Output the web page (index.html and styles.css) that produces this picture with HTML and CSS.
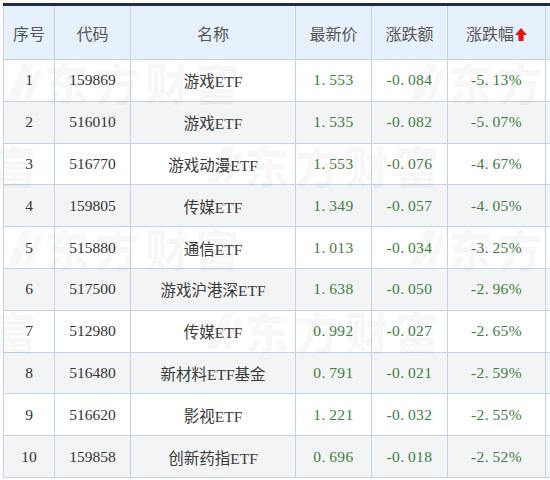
FILE: index.html
```html
<!DOCTYPE html>
<html lang="zh-CN">
<head>
<meta charset="utf-8">
<title>ETF涨跌幅排行</title>
<link rel="stylesheet" href="styles.css">
</head>
<body>
<div class="page">
  <table class="rank">
    <colgroup>
      <col class="c-no"><col class="c-code"><col class="c-name"><col class="c-price"><col class="c-chg"><col class="c-pct"><col class="c-more">
    </colgroup>
    <thead>
      <tr>
        <th>序号</th><th>代码</th><th>名称</th><th>最新价</th><th>涨跌额</th>
        <th>涨跌幅<svg class="sort-up" width="12" height="13" viewBox="0 0 12 13"><polygon points="6,0 12,7 8.6,7 8.6,13 3.4,13 3.4,7 0,7" fill="#e8141b"/></svg></th>
        <th></th>
      </tr>
    </thead>
    <tbody>
      <tr><td>1</td><td>159869</td><td class="name">游戏ETF</td><td class="num">1<span class="dot">.</span>553</td><td class="num">-0<span class="dot">.</span>084</td><td class="num">-5<span class="dot">.</span>13%</td><td></td></tr>
      <tr><td>2</td><td>516010</td><td class="name">游戏ETF</td><td class="num">1<span class="dot">.</span>535</td><td class="num">-0<span class="dot">.</span>082</td><td class="num">-5<span class="dot">.</span>07%</td><td></td></tr>
      <tr><td>3</td><td>516770</td><td class="name">游戏动漫ETF</td><td class="num">1<span class="dot">.</span>553</td><td class="num">-0<span class="dot">.</span>076</td><td class="num">-4<span class="dot">.</span>67%</td><td></td></tr>
      <tr><td>4</td><td>159805</td><td class="name">传媒ETF</td><td class="num">1<span class="dot">.</span>349</td><td class="num">-0<span class="dot">.</span>057</td><td class="num">-4<span class="dot">.</span>05%</td><td></td></tr>
      <tr><td>5</td><td>515880</td><td class="name">通信ETF</td><td class="num">1<span class="dot">.</span>013</td><td class="num">-0<span class="dot">.</span>034</td><td class="num">-3<span class="dot">.</span>25%</td><td></td></tr>
      <tr><td>6</td><td>517500</td><td class="name">游戏沪港深ETF</td><td class="num">1<span class="dot">.</span>638</td><td class="num">-0<span class="dot">.</span>050</td><td class="num">-2<span class="dot">.</span>96%</td><td></td></tr>
      <tr><td>7</td><td>512980</td><td class="name">传媒ETF</td><td class="num">0<span class="dot">.</span>992</td><td class="num">-0<span class="dot">.</span>027</td><td class="num">-2<span class="dot">.</span>65%</td><td></td></tr>
      <tr><td>8</td><td>516480</td><td class="name">新材料ETF基金</td><td class="num">0<span class="dot">.</span>791</td><td class="num">-0<span class="dot">.</span>021</td><td class="num">-2<span class="dot">.</span>59%</td><td></td></tr>
      <tr><td>9</td><td>516620</td><td class="name">影视ETF</td><td class="num">1<span class="dot">.</span>221</td><td class="num">-0<span class="dot">.</span>032</td><td class="num">-2<span class="dot">.</span>55%</td><td></td></tr>
      <tr><td>10</td><td>159858</td><td class="name">创新药指ETF</td><td class="num">0<span class="dot">.</span>696</td><td class="num">-0<span class="dot">.</span>018</td><td class="num">-2<span class="dot">.</span>52%</td><td></td></tr>
    </tbody>
  </table>

  <div class="watermark" aria-hidden="true">
    <div class="wm-row">
      <div class="wm"><svg class="wm-logo" width="34" height="40" viewBox="0 0 34 40"><path d="M16 2 L27 2 L11 38 L0 38 Z M29 8 L34 8 L34 14 L23 38 L16 38 Z"/></svg><span>东方财富</span></div>
      <div class="wm"><svg class="wm-logo" width="34" height="40" viewBox="0 0 34 40"><path d="M16 2 L27 2 L11 38 L0 38 Z M29 8 L34 8 L34 14 L23 38 L16 38 Z"/></svg><span>东方财富</span></div>
    </div>
    <div class="wm-row shifted">
      <div class="wm"><svg class="wm-logo" width="34" height="40" viewBox="0 0 34 40"><path d="M16 2 L27 2 L11 38 L0 38 Z M29 8 L34 8 L34 14 L23 38 L16 38 Z"/></svg><span>东方财富</span></div>
      <div class="wm"><svg class="wm-logo" width="34" height="40" viewBox="0 0 34 40"><path d="M16 2 L27 2 L11 38 L0 38 Z M29 8 L34 8 L34 14 L23 38 L16 38 Z"/></svg><span>东方财富</span></div>
    </div>
    <div class="wm-row">
      <div class="wm"><svg class="wm-logo" width="34" height="40" viewBox="0 0 34 40"><path d="M16 2 L27 2 L11 38 L0 38 Z M29 8 L34 8 L34 14 L23 38 L16 38 Z"/></svg><span>东方财富</span></div>
      <div class="wm"><svg class="wm-logo" width="34" height="40" viewBox="0 0 34 40"><path d="M16 2 L27 2 L11 38 L0 38 Z M29 8 L34 8 L34 14 L23 38 L16 38 Z"/></svg><span>东方财富</span></div>
    </div>
    <div class="wm-row shifted">
      <div class="wm"><svg class="wm-logo" width="34" height="40" viewBox="0 0 34 40"><path d="M16 2 L27 2 L11 38 L0 38 Z M29 8 L34 8 L34 14 L23 38 L16 38 Z"/></svg><span>东方财富</span></div>
      <div class="wm"><svg class="wm-logo" width="34" height="40" viewBox="0 0 34 40"><path d="M16 2 L27 2 L11 38 L0 38 Z M29 8 L34 8 L34 14 L23 38 L16 38 Z"/></svg><span>东方财富</span></div>
    </div>
  </div>
</div>
</body>
</html>
```
FILE: styles.css
```css
html, body {
  margin: 0;
  padding: 0;
  background: #ffffff;
}

.page {
  position: relative;
  width: 550px;
  height: 480px;
  overflow: hidden;
  padding: 3px 0 0 3px;
  box-sizing: border-box;
  font-family: "Liberation Serif", "Noto Sans CJK SC", serif;
}

.rank {
  border-collapse: collapse;
  table-layout: fixed;
  width: 580px;
  border-top: 3px solid #1d2d52;
}

.c-no { width: 51px; }
.c-code { width: 76px; }
.c-name { width: 165px; }
.c-price { width: 76px; }
.c-chg { width: 76px; }
.c-pct { width: 98px; }
.c-more { width: 38px; }

.rank th,
.rank td {
  border: 1px solid #c3d5e5;
  text-align: center;
  padding: 0;
  white-space: nowrap;
}

.rank th {
  height: 53px;
  background: #e7f1fb;
  color: #555555;
  font-family: "Noto Sans CJK SC", sans-serif;
  font-weight: normal;
  font-size: 16px;
}

.sort-up {
  vertical-align: -1px;
  margin-left: 1px;
}

.rank td {
  height: 40.8px;
  color: #333333;
  font-size: 15.5px;
}

.rank tbody tr:nth-child(even) td {
  background: #f3f4f5;
}

.rank td.name {
  color: #3a3a3a;
}

.rank td.num {
  color: #3f7d3f;
  letter-spacing: 0.4px;
}

.dot {
  padding-right: 0.22em;
}

.watermark {
  position: absolute;
  left: 0;
  top: 40px;
  width: 550px;
  display: flex;
  flex-direction: column;
  pointer-events: none;
  color: rgba(0, 0, 0, 0.03);
  fill: rgba(0, 0, 0, 0.03);
}

.wm-row {
  height: 83px;
  display: flex;
  align-items: center;
  padding-left: 7px;
}

.wm-row.shifted {
  margin-left: -196px;
  padding-left: 0;
}

.wm {
  flex: none;
  width: 403px;
  display: flex;
  align-items: center;
  gap: 4px;
}

.wm span {
  font-family: "Noto Sans CJK SC", sans-serif;
  font-weight: 900;
  font-size: 44px;
  letter-spacing: 6px;
  line-height: 1;
}
```
